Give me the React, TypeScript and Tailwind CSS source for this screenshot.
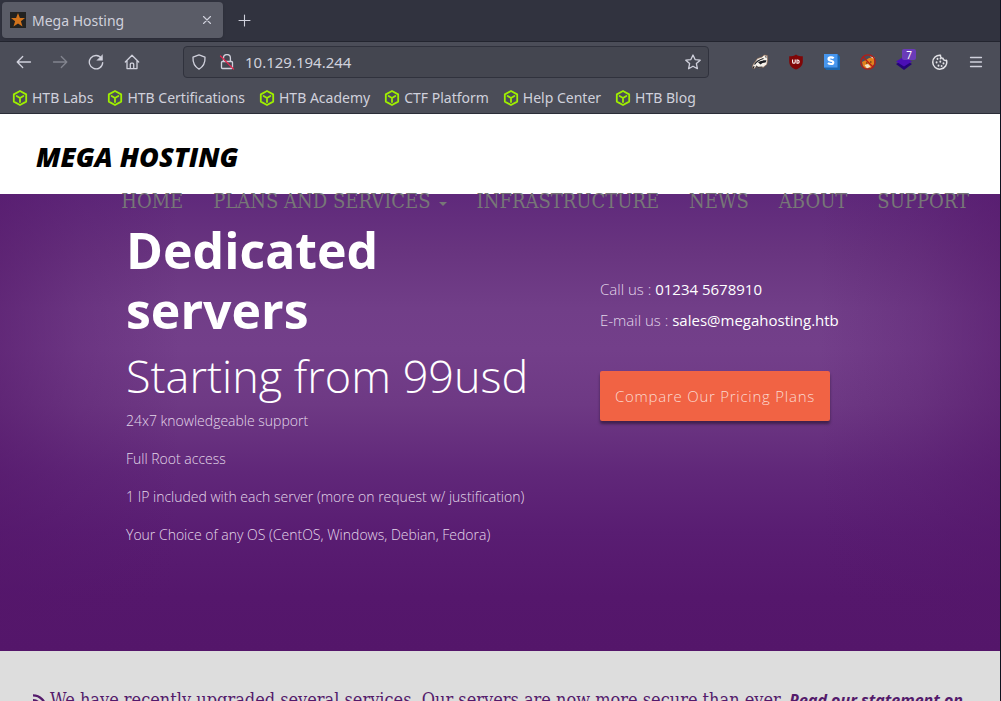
import React from 'react';

const bookmarks = [
  'HTB Labs',
  'HTB Certifications',
  'HTB Academy',
  'CTF Platform',
  'Help Center',
  'HTB Blog',
];

const features = [
  '24x7 knowledgeable support',
  'Full Root access',
  '1 IP included with each server (more on request w/ justification)',
  'Your Choice of any OS (CentOS, Windows, Debian, Fedora)',
];

const navItems = ['HOME', 'PLANS AND SERVICES', 'INFRASTRUCTURE', 'NEWS', 'ABOUT', 'SUPPORT'];

type IconProps = { children: React.ReactNode; className?: string };

function Icon({ children, className = '' }: IconProps) {
  return (
    <svg
      viewBox="0 0 16 16"
      className={`size-4 shrink-0 ${className}`}
      fill="none"
      stroke="currentColor"
      strokeWidth="1.3"
      strokeLinecap="round"
      strokeLinejoin="round"
      aria-hidden="true"
    >
      {children}
    </svg>
  );
}

function ToolButton({ label, children }: { label: string; children: React.ReactNode }) {
  return (
    <button type="button" aria-label={label} className="flex size-9 items-center justify-center">
      {children}
    </button>
  );
}

function CubeIcon() {
  return (
    <svg viewBox="0 0 16 16" className="size-4 shrink-0" fill="none" stroke="#9fef00" strokeWidth="1.8" strokeLinejoin="round" strokeLinecap="round" aria-hidden="true">
      <path d="M8 1 14.2 4.4V11.6L8 15 1.8 11.6V4.4Z" />
      <path d="M4.6 6 8 8 11.4 6M8 8V12" />
    </svg>
  );
}

function TabStrip() {
  return (
    <div className="flex h-[42px] shrink-0 items-start border-b border-[#23252f] bg-[#31333f] pt-[2px] pl-[2px]">
      <div className="flex h-9 w-[221px] items-center rounded bg-[#5a5c67] px-2 shadow-sm">
        <svg viewBox="0 0 16 16" className="size-4 shrink-0" aria-hidden="true">
          <rect width="16" height="16" fill="#222220" />
          <path d="M8 1 9.9 6H15L10.9 9.2 12.5 14.6 8 11.4 3.5 14.6 5.1 9.2 1 6H6.1Z" fill="#d1731c" />
        </svg>
        <span className="ml-[6px] grow">Mega Hosting</span>
        <button type="button" aria-label="Close tab" className="flex size-4 items-center justify-center">
          <Icon>
            <path d="M4.500 4.500 11.500 11.500M11.500 4.500 4.500 11.500" strokeWidth="1.1" />
          </Icon>
        </button>
      </div>
      <button type="button" aria-label="New tab" className="ml-[3px] flex size-9 items-center justify-center">
        <Icon>
          <path d="M8.500 3V14M3 8.500H14" strokeWidth="1.100" />
        </Icon>
      </button>
    </div>
  );
}

function Extensions() {
  return (
    <div className="flex items-center">
      <ToolButton label="Privacy Badger">
        <svg viewBox="0 0 16 16" className="size-4" aria-hidden="true">
          <path d="M.5 14C.3 12 1.500 9.500 3 8L5.500 4.500 10 3 12 1 15.300 1.500 15.600 6 14.800 10.500 11 13.500 7 13.800 4 12.500 2.500 14.500Z" fill="#f6f1ea" stroke="#8f6a52" strokeWidth=".7" />
          <path d="M2.500 10.500C4 8 6.500 6 11.500 4.500" fill="none" stroke="#1a1b20" strokeWidth="1.200" />
          <path d="M6 8.300C9 6.500 12 6.200 14.600 6.400L13.500 8.600 10.500 8.900 8.500 10.600Z" fill="#1a1b20" />
          <path d="M4 11.800 6 13.300 10.500 13" fill="none" stroke="#1a1b20" strokeWidth=".9" />
          <path d="M12.800 2.200 14.500 2.600 14.200 4.300Z" fill="#25232a" />
          <path d="M1 14.300 2.200 12.300" stroke="#1a1b20" strokeWidth="1.200" />
        </svg>
      </ToolButton>
      <ToolButton label="uBlock Origin">
        <svg viewBox="0 0 16 16" className="size-4" aria-hidden="true">
          <path d="M8 .5C10 2 12 2.300 14.800 2.300V7.500C14.800 11.500 12 14 8 15.600 4 14 1.200 11.500 1.200 7.500V2.300C4 2.300 6 2 8 .5Z" fill="#800607" />
          <path d="M4.600 5.600V8A1.300 1.300 0 0 0 7.200 8V5.600M9 6H9.900A1.700 1.700 0 0 1 9.900 9.300H9Z" fill="none" stroke="#fff" strokeWidth="1.100" />
        </svg>
      </ToolButton>
      <ToolButton label="Shodan">
        <svg viewBox="0 0 16 16" className="size-4" aria-hidden="true">
          <path d="M0 0H13.500L16 2.500V16H2.500L0 13.500Z" fill="#1b65ae" />
          <rect width="13.500" height="13.500" fill="#4796ee" />
          <path d="M9.700 4.300C8.300 2.900 4.500 3 4.500 5 4.500 7.200 9.300 6.200 9.300 8.400 9.300 10.500 5.500 10.400 4 8.900" fill="none" stroke="#fff" strokeWidth="2.100" />
        </svg>
      </ToolButton>
      <ToolButton label="FoxyProxy">
        <svg viewBox="0 0 16 16" className="size-4" aria-hidden="true">
          <path d="M2 8 6 6 9 4 14.500 3 14 10 11 14 5 14.500 3 12Z" fill="#e3811b" />
          <path d="M4.500 11 8 10 10.500 12.500 7 14.500Z" fill="#f3e2c6" />
          <path d="M10 2.500 14 3 13.500 5Z" fill="#f8ead7" />
          <path d="M6 9H7.500M10 8H11.500" stroke="#3b2415" />
          <circle cx="8" cy="8" r="7.200" fill="none" stroke="#b81b16" strokeWidth="1.300" />
          <path d="M3 3 13 13" stroke="#b81b16" strokeWidth="1.300" />
        </svg>
      </ToolButton>
      <div className="relative">
        <ToolButton label="Wappalyzer">
          <svg viewBox="0 0 16 16" className="size-4" aria-hidden="true">
            <path d="M0 10 8 5.500 16 10 8 16Z" fill="#250378" />
            <path d="M0 7.500 8 2.500 16 7.500 8 12.500Z" fill="#4b0fb5" />
          </svg>
        </ToolButton>
        <span className="absolute top-[5px] right-[6px] flex h-[11px] w-[14px] items-center justify-center rounded-xs bg-[#6a3bb8] text-[10px] leading-none text-white">7</span>
      </div>
      <ToolButton label="Cookie editor">
        <Icon className="text-[#e2e2e6]">
          <path d="M8.500 1.200A2.500 2.500 0 0 0 11 4.300 2.500 2.500 0 0 0 14.500 6.300 7 7 0 1 1 8.500 1.200Z" strokeWidth="1.500" />
          <path d="M5.500 4.800V5M8.300 7.500V7.700M4.600 8.300V8.500M11.500 9.300V9.500M6.500 11.500V11.700M9.600 11.900V12M8.500 4.400V4.600" strokeWidth="1.900" />
        </Icon>
      </ToolButton>
      <ToolButton label="Open menu">
        <Icon>
          <path d="M2.500 3.500H13.500M2.500 8H13.500M2.500 12.500H13.500" />
        </Icon>
      </ToolButton>
    </div>
  );
}

function Toolbar() {
  return (
    <div className="flex h-10 shrink-0 items-center pr-[6px] pl-[6px]">
      <ToolButton label="Back">
        <Icon><path d="M1.200 8H14.500M6.700 2.500 1.200 8 6.700 13.500" /></Icon>
      </ToolButton>
      <button type="button" aria-label="Forward" disabled className="flex size-9 items-center justify-center text-[#82848e]">
        <Icon><path d="M14.800 8H1.500M9.300 2.500 14.800 8 9.300 13.500" /></Icon>
      </button>
      <ToolButton label="Reload">
        <Icon>
          <path d="M13.600 4.500A6.700 6.700 0 1 0 14.700 8.600" />
          <path d="M14.500 1V6.300H9.200Z" fill="currentColor" strokeWidth=".5" />
        </Icon>
      </ToolButton>
      <ToolButton label="Home">
        <Icon>
          <path d="M1.300 8 8 1.300 14.700 8M3 6.800V14.600H13V6.800M6.300 14.500V10.200A1 1 0 0 1 7.300 9.200H8.700A1 1 0 0 1 9.700 10.200V14.500" />
        </Icon>
      </ToolButton>
      <div className="ml-[33px] flex h-8 min-w-0 grow items-center rounded border border-[#30323d] bg-[#444650] px-[7px]">
        <Icon>
          <path d="M8 .9 14 3.200C14.300 8.500 12.500 12.500 8 15.100 3.500 12.500 1.700 8.500 2 3.200Z" />
        </Icon>
        <Icon className="ml-3">
          <path d="M4.500 7.500V4A3.400 3.400 0 0 1 11.400 4V7.500M3.500 7.500H12.500A1 1 0 0 1 13.500 8.500V13.500A1 1 0 0 1 12.500 14.500H3.500A1 1 0 0 1 2.500 13.500V8.500A1 1 0 0 1 3.500 7.500Z" />
          <path d="M1.500 2 14.500 15" stroke="#e22850" />
        </Icon>
        <input
          aria-label="Address"
          defaultValue="10.129.194.244"
          className="ml-[10px] min-w-0 grow bg-transparent text-[15px] outline-none"
        />
        <button type="button" aria-label="Bookmark this page">
          <Icon>
            <path d="M8 1 10.100 5.600 15.200 6.200 11.400 9.600 12.400 14.700 8 12.200 3.600 14.700 4.600 9.600 .8 6.200 5.900 5.600Z" />
          </Icon>
        </button>
      </div>
      <div className="ml-[33px]">
        <Extensions />
      </div>
    </div>
  );
}

function Bookmarks() {
  return (
    <nav aria-label="Bookmarks" className="flex h-8 shrink-0 items-center gap-[14px] border-b border-[#2b2d38] px-3">
      {bookmarks.map((label) => (
        <a key={label} href="#" className="flex items-center gap-1 whitespace-nowrap">
          <CubeIcon />
          {label}
        </a>
      ))}
    </nav>
  );
}

function SiteNav() {
  return (
    <nav aria-label="Main" className="flex h-[14px] items-center justify-end gap-[30px] pr-[31px] font-['DejaVu_Serif_Condensed','DejaVu_Serif',serif] text-[20px] leading-[14px] whitespace-nowrap text-[#777777]">
      {navItems.map((item) => (
        <a key={item} href="#" className="flex items-center">
          {item}
          {item === 'PLANS AND SERVICES' && (
            <svg viewBox="0 0 8 4" className="mt-[6px] ml-2 h-1 w-2" fill="currentColor" aria-hidden="true">
              <path d="M0 0H8L4 4Z" />
            </svg>
          )}
        </a>
      ))}
    </nav>
  );
}

function Hero() {
  return (
    <section className="h-[457px] shrink-0 bg-[linear-gradient(to_right,rgba(84,22,106,0.55)_0%,rgba(84,22,106,0.25)_8%,rgba(84,22,106,0)_18%,rgba(84,22,106,0)_82%,rgba(84,22,106,0.25)_92%,rgba(84,22,106,0.55)_100%),linear-gradient(to_bottom,#5f297b_0%,#68347f_12%,#713e88_25%,#733f8a_34%,#6e3984_46%,#602779_61%,#591d72_74%,#55176c_88%,#54166a_100%)]">
      <SiteNav />
      <div className="grid grid-cols-[474px_1fr] pt-3 pl-[126px] font-['Open_Sans',sans-serif] font-light text-[#e3d8e9]">
        <div>
          <h1 className="w-[400px] text-[50px] leading-[60px] font-bold text-white">Dedicated servers</h1>
          <h2 className="mt-[11px] text-[45px] leading-[50px] whitespace-nowrap text-white">Starting from 99usd</h2>
          <ul className="mt-[10px] flex flex-col gap-[18px] text-[14px] leading-5 whitespace-nowrap">
            {features.map((f) => (
              <li key={f}>{f}</li>
            ))}
          </ul>
        </div>
        <div className="pt-[54px] text-[15px] leading-[31px]">
          <p>Call us : <span className="font-normal text-white">01234 5678910</span></p>
          <p>E-mail us : <a href="#" className="font-normal text-white">sales@megahosting.htb</a></p>
          <button type="button" className="mt-[35px] h-[50px] w-[230px] rounded-xs bg-[#f16344] text-[15px] tracking-wider text-[#fbd9d0] shadow-[0_3px_3px_rgba(0,0,0,0.4)]">
            Compare Our Pricing Plans
          </button>
        </div>
      </div>
    </section>
  );
}

export default function App() {
  return (
    <div className="flex h-screen flex-col overflow-hidden border-r border-[#10121f] bg-[#4b4d58] font-['Noto_Sans',sans-serif] text-[14px] text-[#d0d1dc]">
      <TabStrip />
      <Toolbar />
      <Bookmarks />
      <main className="flex min-h-0 grow flex-col overflow-hidden bg-[#dddddd]">
        <header className="flex h-20 shrink-0 items-center bg-white pt-[6px] pl-[36px]">
          <a href="#" className="font-['Open_Sans',sans-serif] text-[27px] font-extrabold text-black italic">MEGA HOSTING</a>
        </header>
        <Hero />
        <p className="shrink-0 px-[33px] pt-[37px] font-['DejaVu_Serif_Condensed','DejaVu_Serif',serif] text-[18px] leading-6 text-[#541a6b]">
          <svg viewBox="0 0 12 12" className="mr-[3px] inline size-[14px]" fill="none" stroke="currentColor" strokeWidth="2" aria-hidden="true">
            <path d="M0 1.200A10.800 10.800 0 0 1 10.800 12M0 5.200A6.800 6.800 0 0 1 6.800 12" />
            <circle cx="1.500" cy="10.500" r="1.500" fill="currentColor" stroke="none" />
          </svg>
          We have recently upgraded several services. Our servers are now more secure than ever.{' '}
          <a href="#" className="font-['Noto_Sans',sans-serif] text-[16px] font-bold italic">Read our statement on</a>
        </p>
      </main>
    </div>
  );
}
